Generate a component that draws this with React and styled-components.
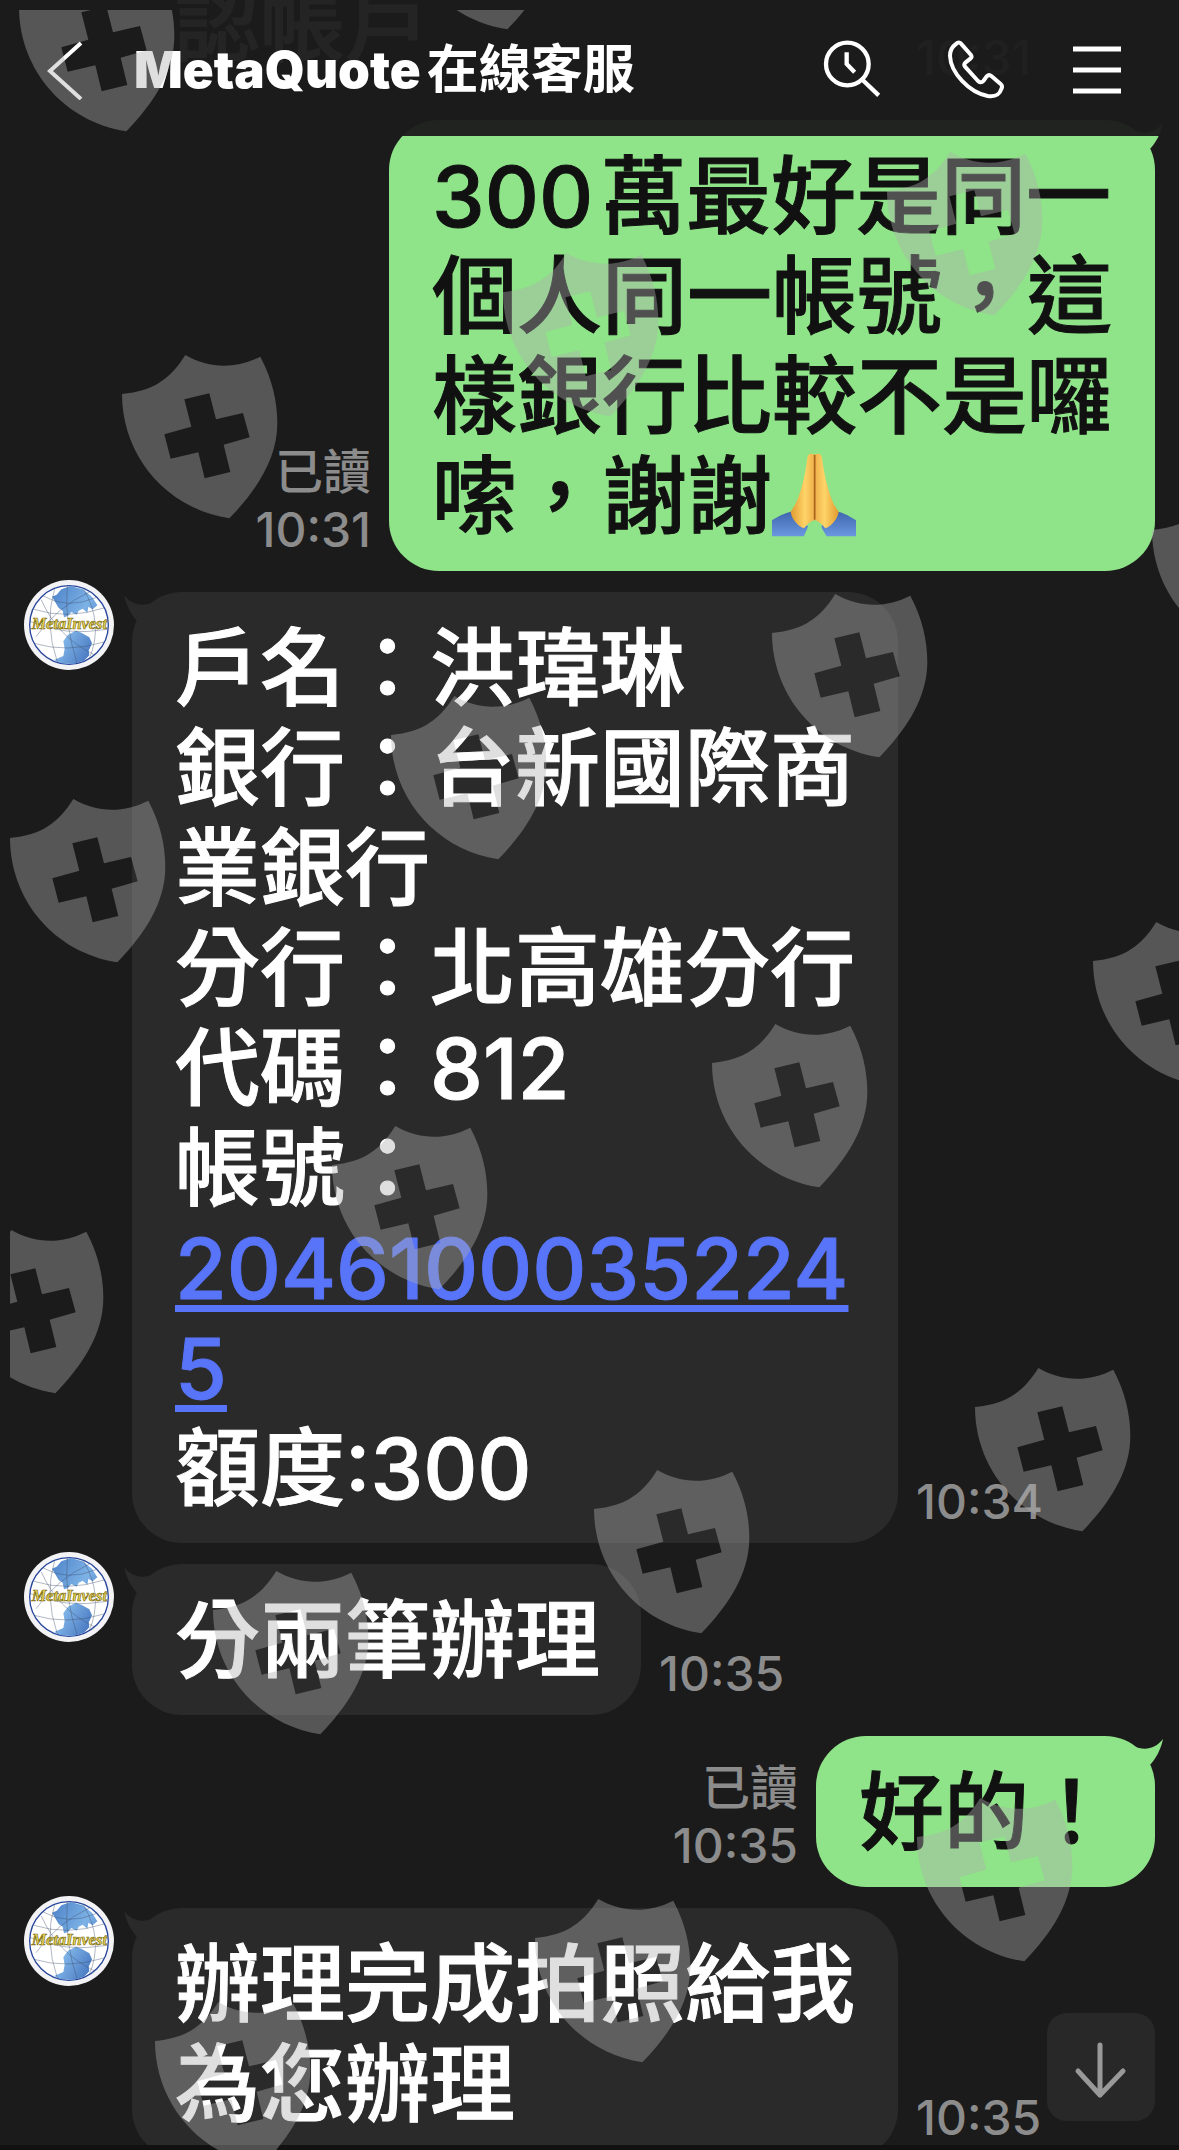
import React from "react";
import styled, { createGlobalStyle } from "styled-components";

const GlobalStyle = createGlobalStyle`
  * { box-sizing: border-box; }
  body {
    margin: 0;
    background: #1b1b1b;
    font-family: Inter, "Noto Sans CJK TC", sans-serif;
    text-autospace: no-autospace;
  }
`;

const Screen = styled.div`
  position: relative;
  display: flex;
  flex-direction: column;
  height: 100vh;
  overflow: hidden;
`;

const Header = styled.header`
  position: relative;
  z-index: 2;
  flex: none;
  display: flex;
  align-items: center;
  height: 136px;
  padding: 4px 50px 0 36px;
  background: rgba(27, 27, 27, 0.96);
`;

const IconButton = styled.button`
  flex: none;
  display: block;
  width: 60px;
  height: 60px;
  padding: 0;
  border: 0;
  background: none;
  color: #fff;

  svg { display: block; }
`;

const Title = styled.h1`
  flex: 1;
  display: flex;
  gap: 6px;
  margin: 0 0 0 38px;
  color: #fff;
  font-size: 51px;
  line-height: 60px;
  font-weight: 900;
  white-space: nowrap;
`;

const TitleCjk = styled.span`
  font-size: 52px;
  font-weight: 600;
`;

const Actions = styled.nav`
  display: flex;
  gap: 64px;
`;

/* The list runs on under the translucent header; its oldest row is scrolled off. */
const Chat = styled.main`
  flex: 1;
  min-height: 0;
  display: flex;
  flex-direction: column;
  gap: 21px;
  margin-top: -136px;
  padding: 0 24px;
  overflow: hidden;

  > :first-child { margin-top: -252px; }
`;

const Row = styled.article`
  flex: none;
  display: flex;
  align-items: flex-end;
  justify-content: ${(p) => (p.$mine ? "flex-end" : "flex-start")};
  gap: 18px;
`;

const AvatarSvg = styled.svg`
  flex: none;
  align-self: flex-start;
  width: 90px;
  height: 90px;
  margin-top: -12px;
`;

const BubbleBox = styled.div`
  position: relative;
  width: ${(p) => (p.$wide ? "766px" : "auto")};
  max-width: 766px;
  padding: 27px 41px 24px 43px;
  border-radius: 50px;
  background: ${(p) => (p.$mine ? "#8fe388" : "#2a2a2a")};
  color: ${(p) => (p.$mine ? "#111" : "#fff")};
`;

const BubbleText = styled.p`
  margin: 0;
  font-size: 85px;
  line-height: 100px;
  font-weight: 500;
  -webkit-text-stroke: 1px currentColor;
  white-space: pre-wrap;
  word-break: break-all;
`;

const Tail = styled.svg`
  position: absolute;
  top: 3px;
  ${(p) => (p.$mine ? "right: -8px; transform: scaleX(-1);" : "left: -8px;")}
  width: 50px;
  height: 40px;
  fill: ${(p) => (p.$mine ? "#8fe388" : "#2a2a2a")};
`;

const Meta = styled.div`
  display: flex;
  flex-direction: column;
  align-items: flex-end;
  padding-bottom: 12px;
  color: #8c8c8c;
  font-size: 48px;
  line-height: 58px;
  font-weight: 500;
`;

const Num = styled.span`
  margin-right: ${(p) => (p.$spaced ? "8px" : "0")};
  font-size: 84px;
  line-height: 1;
`;

const Account = styled.a`
  color: #5874f8;
  font-size: 84px;
  line-height: 1;
  text-decoration: underline;
  text-decoration-thickness: 7px;
  text-underline-offset: 6px;
  text-decoration-skip-ink: none;
`;

const EmojiSvg = styled.svg`
  display: inline-block;
  width: 84px;
  height: 84px;
  vertical-align: -10px;
`;

const DownButton = styled.button`
  position: absolute;
  z-index: 1;
  right: 24px;
  bottom: 29px;
  width: 108px;
  height: 108px;
  padding: 0;
  border: 0;
  border-radius: 20px;
  background: #282828;

  svg { display: block; }
`;

const BottomEdge = styled.footer`
  flex: none;
  height: 5px;
  background: #111;
`;

const WatermarkSvg = styled.svg`
  position: absolute;
  z-index: 3;
  inset: 10px 0 0 10px;
  width: calc(100% - 10px);
  height: calc(100% - 10px);
  pointer-events: none;
`;

const shields = [
  [19, -32], [400, -134], [887, 152], [503, 253], [122, 355], [1152, 491],
  [772, 594], [391, 696], [10, 799], [1093, 922], [712, 1024], [332, 1126],
  [-52, 1230], [975, 1368], [594, 1470], [213, 1571], [917, 1798],
  [535, 1899], [155, 2002],
];

function Watermark() {
  return (
    <WatermarkSvg aria-hidden="true">
      <defs>
        <path
          id="shield"
          transform="scale(.3333)"
          fillRule="evenodd"
          d="M0 117C95 108 145 72 190 0C262 42 342 42 415 5C452 75 466 140 466 205C466 310 405 405 322 490C130 460 0 300 0 117ZM187 133L208 215L127 238L146 311L229 292L248 370L325 351L305 269L383 247L363 174L282 193L262 115Z"
        />
      </defs>
      <g fill="#aeaeae" fillOpacity=".4">
        {shields.map(([x, y]) => (
          <use key={`${x},${y}`} href="#shield" x={x - 10} y={y - 10} />
        ))}
      </g>
    </WatermarkSvg>
  );
}

function Avatar() {
  return (
    <AvatarSvg viewBox="0 0 270 270" role="img" aria-label="MetaInvest">
      <defs>
        <linearGradient id="land" x1="0" y1="0" x2="1" y2="1">
          <stop offset="0" stopColor="#4c82c8" />
          <stop offset=".5" stopColor="#7db2e6" />
          <stop offset="1" stopColor="#3765b4" />
        </linearGradient>
      </defs>
      <circle cx="135" cy="135" r="135" fill="#f3f3f6" />
      <circle cx="135" cy="135" r="118" fill="#fff" stroke="#27459c" strokeWidth="4" />
      <path fill="url(#land)" d="M98 44L112 28L140 18L176 28L204 50L220 76L206 88L193 80L190 98L176 86L164 92L158 104L142 96L132 108L120 112L116 92L104 84L90 60L84 50ZM156 152L172 158L196 172L204 190L194 212L196 226L180 242L148 252L112 250L90 240L118 228L122 206L118 184L132 164Z" />
      <g fill="none" stroke="#3b4d6c" strokeWidth="1.5" strokeOpacity=".8">
        <path d="M30 88Q130 120 240 84M18 124Q120 170 250 148M30 190Q130 220 240 186M58 48Q130 90 218 52M92 26Q60 130 100 246M130 18Q120 130 160 252M178 26Q240 130 196 236M52 60Q100 170 210 224M36 170Q100 80 196 36" />
      </g>
      <text
        x="136" y="148" textAnchor="middle"
        fontFamily="Liberation Serif, serif" fontWeight="700" fontStyle="italic" fontSize="49"
        fill="#ead85a" stroke="#7d6d14" strokeWidth="2"
      >MetaInvest</text>
    </AvatarSvg>
  );
}

function PrayingHands() {
  return (
    <EmojiSvg viewBox="0 0 252 252" role="img" aria-label="🙏">
      <defs>
        <linearGradient id="handL" x1="0" x2="1">
          <stop offset="0" stopColor="#e09a30" />
          <stop offset=".6" stopColor="#ffd468" />
          <stop offset="1" stopColor="#efb04a" />
        </linearGradient>
        <linearGradient id="handR" x1="1" x2="0">
          <stop offset="0" stopColor="#e09a30" />
          <stop offset=".6" stopColor="#ffd468" />
          <stop offset="1" stopColor="#efb04a" />
        </linearGradient>
        <linearGradient id="sleeve" x1="0" y1="0" x2="0" y2="1">
          <stop offset="0" stopColor="#3f66ae" />
          <stop offset="1" stopColor="#6a98e0" />
        </linearGradient>
      </defs>
      <path fill="url(#sleeve)" d="M0 202C20 188 36 182 56 176L108 220C104 234 98 242 96 250H0ZM252 202C232 188 218 182 200 176L148 220C152 234 160 242 164 250H252Z" />
      <path fill="url(#handL)" d="M127 4C114 0 108 4 106 14C100 60 94 84 88 104C80 136 70 156 56 176C58 196 76 218 96 226C106 214 116 204 127 202Z" />
      <path fill="url(#handR)" d="M129 4C142 0 148 4 150 14C156 60 162 84 168 104C176 136 186 156 200 176C198 196 180 218 160 226C150 214 140 204 129 202Z" />
      <path d="M128 6V200" stroke="#a8641c" strokeWidth="5" />
    </EmojiSvg>
  );
}

function Bubble({ mine, wide, children }) {
  return (
    <BubbleBox $mine={mine} $wide={wide}>
      <Tail $mine={mine} viewBox="0 0 50 40" aria-hidden="true">
        <path d="M0 0C8 10 18 12 30 7L50 20L20 40L14 27C7 20 2 10 0 0Z" />
      </Tail>
      <BubbleText>{children}</BubbleText>
    </BubbleBox>
  );
}

function Message({ mine, wide, time, children }) {
  const meta = (
    <Meta>
      {mine && <span>已讀</span>}
      <time>{time}</time>
    </Meta>
  );
  return (
    <Row $mine={mine}>
      {mine ? meta : <Avatar />}
      <Bubble mine={mine} wide={wide}>{children}</Bubble>
      {!mine && meta}
    </Row>
  );
}

export default function App() {
  return (
    <Screen lang="zh-Hant">
      <GlobalStyle />
      <Header>
        <IconButton aria-label="返回">
          <svg width="60" height="60" fill="none" stroke="currentColor" strokeWidth="4">
            <path d="M45 3L14 31L45 59" />
          </svg>
        </IconButton>
        <Title>
          MetaQuote<TitleCjk>在線客服</TitleCjk>
        </Title>
        <Actions>
          <IconButton aria-label="搜尋">
            <svg width="60" height="60" viewBox="0 30 180 180" fill="none" stroke="currentColor" strokeWidth="13">
              <circle cx="79" cy="102" r="64" />
              <path d="M125 150L173 196M77 67V102L101 127" />
            </svg>
          </IconButton>
          <IconButton aria-label="通話">
            <svg width="60" height="60" viewBox="372 30 180 180" fill="none" stroke="currentColor" strokeWidth="12" strokeLinejoin="round">
              <path d="M405 42Q414 33 422 43L450 75Q454 81 448 86L434 97Q427 103 432 110L471 153Q480 161 487 153L497 139Q504 132 511 138L539 162Q546 168 541 177C535 196 522 201 500 198C444 187 389 128 387 78C387 60 393 50 405 42Z" />
            </svg>
          </IconButton>
          <IconButton aria-label="選單">
            <svg width="60" height="60" fill="none" stroke="currentColor" strokeWidth="5">
              <path d="M4 9H52M4 30H52M4 51H52" />
            </svg>
          </IconButton>
        </Actions>
      </Header>
      <Chat>
        <Message wide time="10:31">{"\n\n認帳戶"}</Message>
        <Message mine time="10:31">
          <Num $spaced>300</Num>萬最好是同一個人同一帳號，這樣銀行比較不是囉嗦，謝謝<PrayingHands />
        </Message>
        <Message time="10:34">
          {"戶名：洪瑋琳\n銀行：台新國際商業銀行\n分行：北高雄分行\n代碼："}
          <Num>812</Num>
          {"\n帳號：\n"}
          <Account href="tel:20461000352245">20461000352245</Account>
          {"\n額度"}
          <Num>:300</Num>
        </Message>
        <Message time="10:35">分兩筆辦理</Message>
        <Message mine time="10:35">好的！</Message>
        <Message time="10:35">辦理完成拍照給我為您辦理</Message>
      </Chat>
      <DownButton aria-label="捲到最新訊息">
        <svg width="108" height="108" fill="none" stroke="#999" strokeWidth="5" strokeLinecap="round" strokeLinejoin="round">
          <path d="M53 32V82M31 58L53 82L76 58" />
        </svg>
      </DownButton>
      <BottomEdge />
      <Watermark />
    </Screen>
  );
}
